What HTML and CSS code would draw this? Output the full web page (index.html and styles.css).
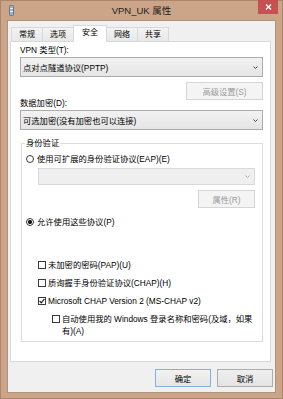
FILE: index.html
```html
<!DOCTYPE html>
<html lang="zh-CN">
<head>
  <meta charset="UTF-8">
  <title>VPN_UK 属性</title>
  <link rel="stylesheet" href="styles.css">
</head>
<body>
  <div class="window">
    <div class="titlebar">
      <svg class="app-icon" width="5" height="11" viewBox="0 0 5 11">
        <rect x="0.5" y="0.5" width="4" height="10" rx="1" fill="#9fb2cc" stroke="#5d7596"/>
        <line x1="1" y1="3.5" x2="4" y2="3.5" stroke="#e8eef6"/>
        <line x1="1" y1="6.5" x2="4" y2="6.5" stroke="#e8eef6"/>
      </svg>
      <div class="title">VPN_UK 属性</div>
      <div class="close">
        <svg width="7" height="6" viewBox="0 0 7 6">
          <path d="M1 0.5 L6 5.5 M6 0.5 L1 5.5" stroke="#fff" stroke-width="1.4"/>
        </svg>
      </div>
    </div>

    <div class="client">
      <div class="tabs">
        <div class="tab">常规</div>
        <div class="tab">选项</div>
        <div class="tab active">安全</div>
        <div class="tab">网络</div>
        <div class="tab">共享</div>
      </div>

      <div class="panel">
        <div class="field-label">VPN 类型(T):</div>
        <div class="combo">
          <span>点对点隧道协议(PPTP)</span>
          <svg class="chevron" width="5" height="3" viewBox="0 0 5 3"><path d="M0.5 0.5 L2.5 2.5 L4.5 0.5" fill="none" stroke="#444"/></svg>
        </div>
        <div class="row-right">
          <button class="btn disabled adv">高级设置(S)</button>
        </div>
        <div class="field-label pull-up">数据加密(D):</div>
        <div class="combo">
          <span>可选加密(没有加密也可以连接)</span>
          <svg class="chevron" width="5" height="3" viewBox="0 0 5 3"><path d="M0.5 0.5 L2.5 2.5 L4.5 0.5" fill="none" stroke="#444"/></svg>
        </div>

        <fieldset class="group">
          <legend>身份验证</legend>
          <div class="option first">
            <span class="radio"></span>
            <span>使用可扩展的身份验证协议(EAP)(E)</span>
          </div>
          <div class="combo disabled-combo">
            <span></span>
            <svg class="chevron" width="5" height="3" viewBox="0 0 5 3"><path d="M0.5 0.5 L2.5 2.5 L4.5 0.5" fill="none" stroke="#b0b0b0"/></svg>
          </div>
          <div class="row-right">
            <button class="btn disabled props">属性(R)</button>
          </div>
          <div class="option second">
            <span class="radio on"></span>
            <span>允许使用这些协议(P)</span>
          </div>

          <div class="checks">
            <div class="option check">
              <span class="box"></span>
              <span>未加密的密码(PAP)(U)</span>
            </div>
            <div class="option check">
              <span class="box"></span>
              <span>质询握手身份验证协议(CHAP)(H)</span>
            </div>
            <div class="option check">
              <span class="box">
                <svg width="6" height="6" viewBox="0 0 6 6"><path d="M0.6 3 L2.3 4.8 L5.4 0.8" fill="none" stroke="#222" stroke-width="1.2"/></svg>
              </span>
              <span>Microsoft CHAP Version 2 (MS-CHAP v2)</span>
            </div>
            <div class="option check sub">
              <span class="box"></span>
              <span class="wrap-text">自动使用我的 Windows 登录名称和密码(及域，如果有)(A)</span>
            </div>
          </div>
        </fieldset>
      </div>

      <div class="actions">
        <button class="btn default">确定</button>
        <button class="btn">取消</button>
      </div>
    </div>
  </div>
</body>
</html>
```

FILE: styles.css
```css
body {
  margin: 0;
  font-family: "Liberation Sans", "Noto Sans CJK SC", sans-serif;
  font-size: 8.3px;
  color: #000;
}

.window {
  width: 283px;
  height: 399px;
  box-sizing: border-box;
  border: 1px solid #a8876e;
  background: #cca487;
  display: flex;
  flex-direction: column;
}

/* title bar */
.titlebar {
  height: 19px;
  display: grid;
  grid-template-columns: 1fr auto 1fr;
  align-items: start;
}

.app-icon {
  display: block;
  margin: 4px 0 0 8px;
}

.title {
  font-size: 9.5px;
  line-height: 19px;
  color: #1e1e1e;
}

.close {
  justify-self: end;
  width: 20px;
  height: 14px;
  margin: -1px 4px 0 0;
  background: #c75050;
  display: flex;
  align-items: center;
  justify-content: center;
}

.close svg {
  display: block;
}

/* client area */
.client {
  flex: 1;
  margin: 0 6px 5px;
  border: 1px solid #a99481;
  background: #f0f0f0;
  display: flex;
  flex-direction: column;
}

.tabs {
  display: flex;
  align-items: flex-end;
  height: 16px;
  margin: 4px 0 0 3px;
}

.tab {
  width: 32px;
  height: 14px;
  box-sizing: border-box;
  margin-right: -1px;
  border: 1px solid #d9d9d9;
  border-bottom: none;
  background: linear-gradient(#f3f3f3, #e8e8e8);
  font-size: 8px;
  line-height: 13px;
  text-align: center;
}

.tab.active {
  width: 34px;
  height: 17px;
  margin-bottom: -1px;
  background: #fff;
  line-height: 14px;
  position: relative;
  z-index: 1;
}

.panel {
  height: 321px;
  box-sizing: border-box;
  margin: 0 4px 0 2px;
  padding: 2px 7px 0 9px;
  border: 1px solid #d9d9d9;
  background: #fff;
}

.field-label {
  line-height: 12px;
}

.pull-up {
  margin-top: -3px;
}

.combo {
  height: 20px;
  box-sizing: border-box;
  margin-top: 1px;
  padding: 0 4px 0 2px;
  border: 1px solid #acacac;
  background: linear-gradient(#f2f2f2, #e5e5e5);
  display: flex;
  align-items: center;
  justify-content: space-between;
}

.chevron {
  display: block;
}

.row-right {
  display: flex;
  justify-content: flex-end;
}

.btn {
  height: 18px;
  box-sizing: border-box;
  padding: 0;
  border: 1px solid #acacac;
  background: linear-gradient(#efefef, #e3e3e3);
  font: inherit;
  color: #000;
}

.btn.disabled {
  color: #9b9b9b;
  border-color: #d5d5d5;
  background: #f4f4f4;
}

.btn.adv {
  width: 77px;
  margin-top: 5px;
}

/* authentication group */
.group {
  margin: 7px 0 0 1px;
  padding: 0 7px 4px 4px;
  border: 1px solid #dcdcdc;
}

.group legend {
  padding: 0 1px;
  margin-left: -1px;
  line-height: 12px;
}

.option {
  display: flex;
  align-items: center;
  gap: 3px;
  line-height: 12px;
}

.option.first {
  margin-top: 4px;
}

.option.second {
  margin-top: 8px;
}

.radio {
  flex: none;
  width: 8px;
  height: 8px;
  box-sizing: border-box;
  border: 1px solid #3a3a3a;
  border-radius: 50%;
  background: #fff;
}

.radio.on {
  background: radial-gradient(circle, #1a1a1a 0 1.8px, #fff 2.4px);
}

.disabled-combo {
  height: 17px;
  margin: 3px 0 0 12px;
  border-color: #d9d9d9;
  background: #efefef;
}

.btn.props {
  width: 57px;
  margin-top: 5px;
}

.checks {
  margin-top: 31px;
}

.option.check {
  gap: 2px;
  margin-top: 6px;
  padding-left: 12px;
}

.box {
  flex: none;
  width: 8px;
  height: 8px;
  box-sizing: border-box;
  border: 1px solid #3a3a3a;
  background: #fff;
  display: flex;
  align-items: center;
  justify-content: center;
}

.box svg {
  display: block;
}

.option.sub {
  align-items: flex-start;
  padding-left: 26px;
}

.option.sub .box {
  margin-top: 2px;
}

.wrap-text {
  flex: 1;
}

/* dialog buttons */
.actions {
  display: flex;
  justify-content: flex-end;
  gap: 6px;
  margin: 7px 2px 0 0;
}

.actions .btn {
  width: 56px;
}

.btn.default {
  border-color: #7fb3e6;
  background: linear-gradient(#f2f2f2, #e6e6e6);
}
```
